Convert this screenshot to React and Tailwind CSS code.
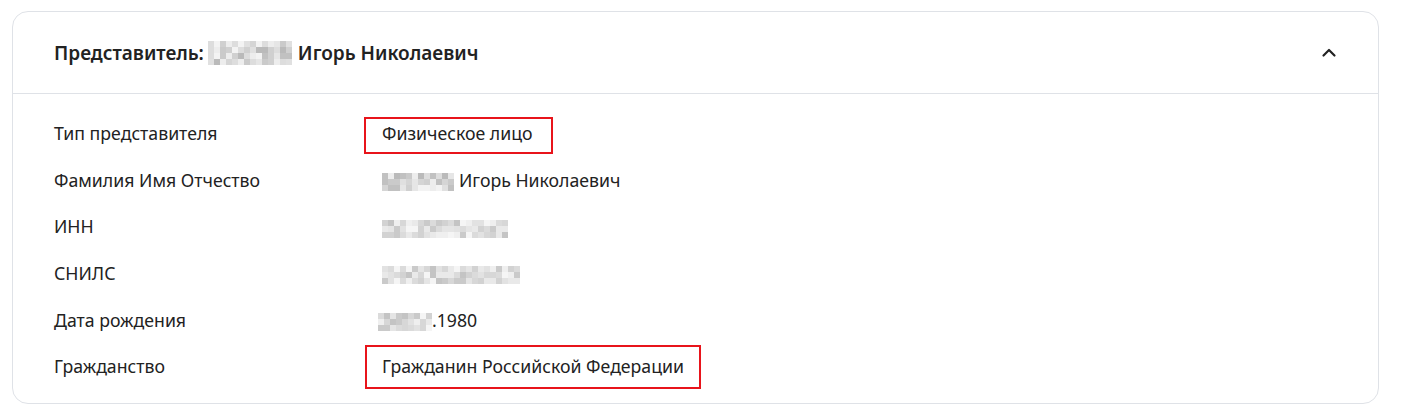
import React from "react";

const shades = ["#d4d4d4", "#bdbdbd", "#e6e6e6", "#a8a8a8", "#cfcfcf", "#efefef", "#b5b5b5", "#dcdcdc", "#c4c4c4", "#9e9e9e"];

function Pixel({ cols, rows, cell = 6, seed = 1 }) {
  const cells = [];
  let s = seed;
  for (let r = 0; r < rows; r++) {
    for (let c = 0; c < cols; c++) {
      s = (s * 9301 + 49297) % 233280;
      const idx = Math.floor((s / 233280) * shades.length);
      cells.push(<span key={r + "-" + c} style={{ background: shades[idx], width: cell, height: cell }} className="block" />);
    }
  }
  return (
    <span className="inline-grid align-middle" style={{ gridTemplateColumns: `repeat(${cols}, ${cell}px)` }}>
      {cells}
    </span>
  );
}

function Row({ label, children }) {
  return (
    <div className="flex items-center h-[46.6px]">
      <div className="w-[328px] shrink-0">{label}</div>
      <div className="flex items-center">{children}</div>
    </div>
  );
}

export default function App() {
  return (
    <div className="w-[1401px] h-[413px] bg-white pt-[11px] pl-[12px] pr-[22px]" style={{ fontFamily: '"Noto Sans", "Open Sans", sans-serif' }}>
      <div className="border border-[#dfe2e7] rounded-[16px] h-[393px] text-[#222]">
        <div className="h-[82px] flex items-center justify-between pl-[41px] pr-[42px] border-b border-[#dfe2e7]">
          <div className="flex items-center text-[19px] font-semibold leading-[24px]">
            <span>Представитель:</span>
            <span className="ml-[4px] mr-[6px] opacity-70"><Pixel cols={14} rows={4} cell={6} seed={7} /></span>
            <span>Игорь Николаевич</span>
          </div>
          <svg width="16" height="16" viewBox="0 0 16 16" fill="none" className="mr-[-1px]">
            <path d="M2.5 10.5 L8 5 L13.5 10.5" stroke="#222" strokeWidth="2.2" strokeLinecap="round" strokeLinejoin="round" />
          </svg>
        </div>
        <div className="pl-[41px] pt-[16px] text-[17.7px] leading-[24px]">
          <Row label="Тип представителя">
            <span className="relative">
              <span className="absolute left-[-18px] right-[-20px] top-[-4px] bottom-[-9px] border-2 border-[#e8141b]" />
              Физическое лицо
            </span>
          </Row>
          <Row label="Фамилия Имя Отчество">
            <span className="flex items-center">
              <span className="opacity-70 mr-[5px]"><Pixel cols={12} rows={3} cell={6} seed={3} /></span>
              Игорь Николаевич
            </span>
          </Row>
          <Row label="ИНН">
            <span className="opacity-60"><Pixel cols={21} rows={3} cell={6} seed={11} /></span>
          </Row>
          <Row label="СНИЛС">
            <span className="opacity-60"><Pixel cols={23} rows={3} cell={6} seed={5} /></span>
          </Row>
          <Row label="Дата рождения">
            <span className="flex items-center ml-[-4px]">
              <span className="opacity-60"><Pixel cols={9} rows={3} cell={6} seed={17} /></span>
              .1980
            </span>
          </Row>
          <Row label="Гражданство">
            <span className="relative">
              <span className="absolute left-[-17px] right-[-17px] top-[-9px] bottom-[-11px] border-2 border-[#e8141b]" />
              Гражданин Российской Федерации
            </span>
          </Row>
        </div>
      </div>
    </div>
  );
}
